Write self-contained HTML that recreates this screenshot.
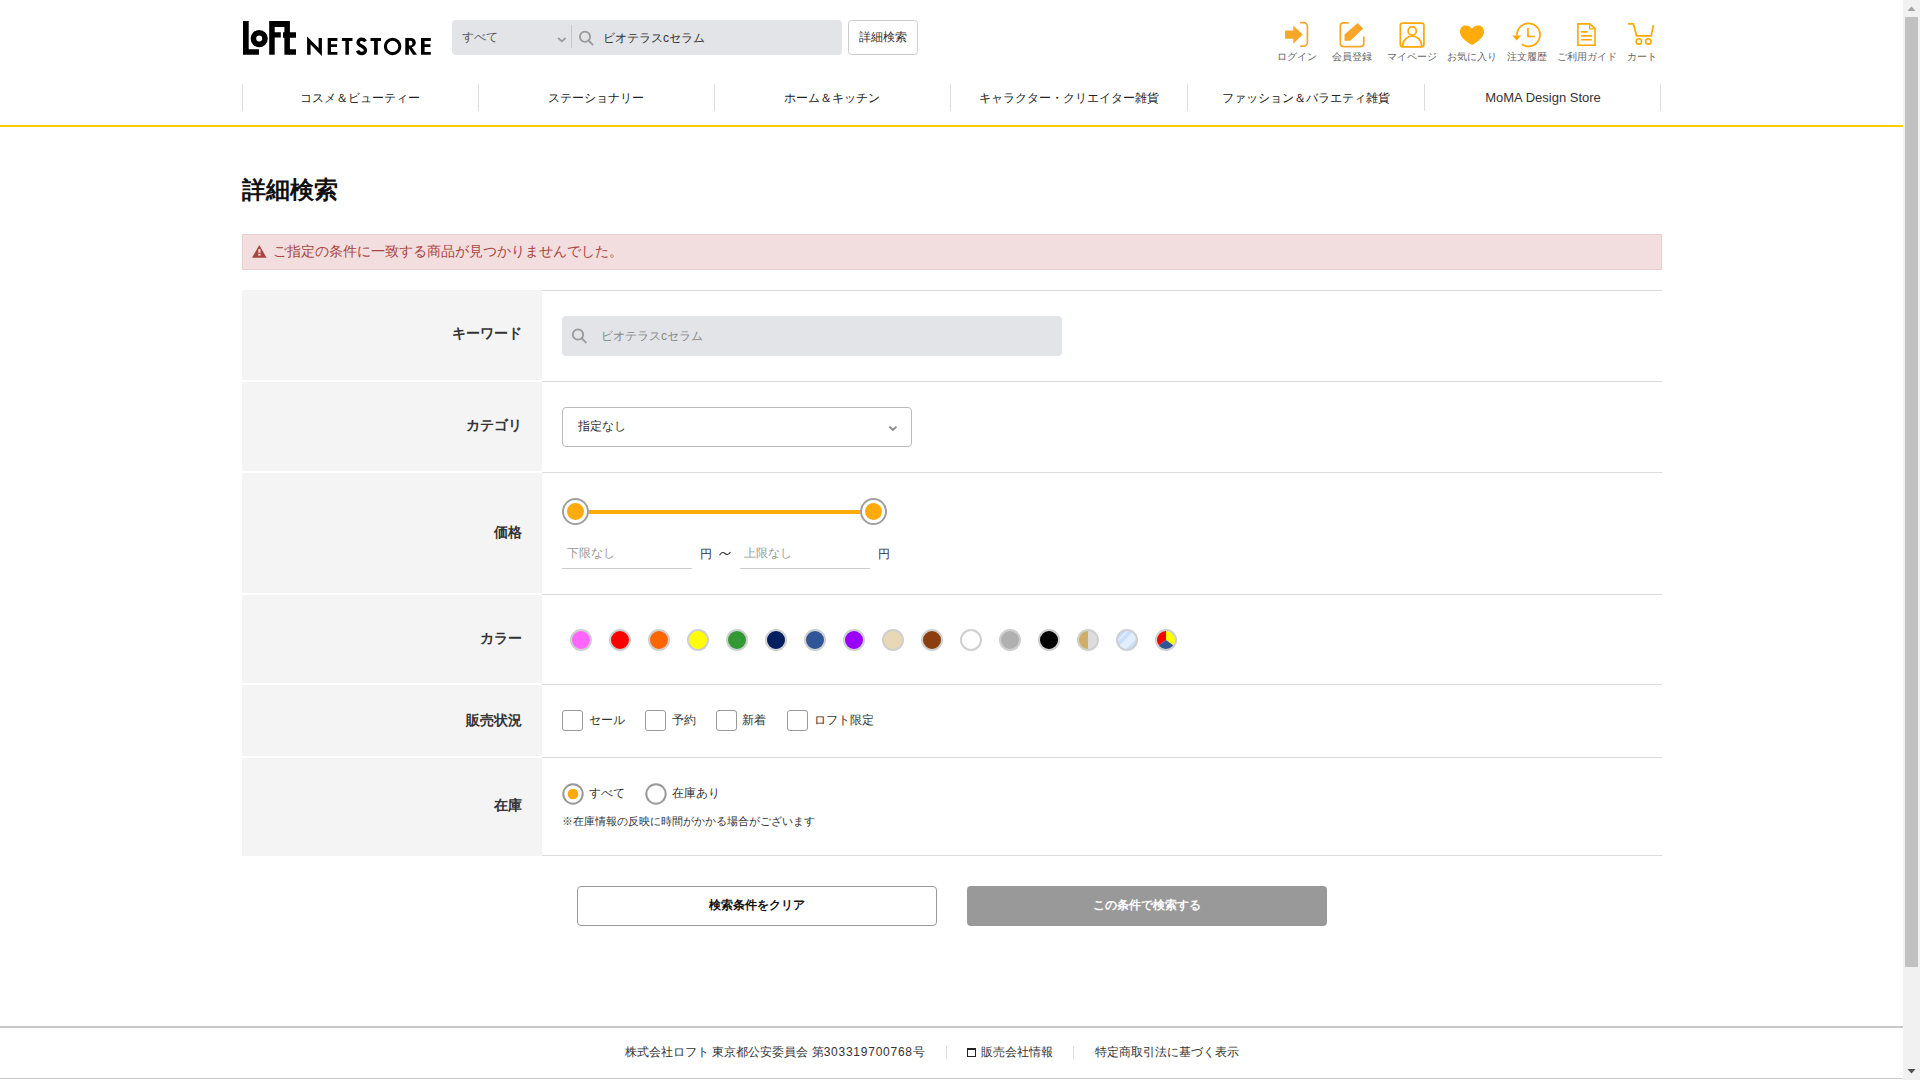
<!DOCTYPE html>
<html lang="ja">
<head>
<meta charset="utf-8">
<style>
html,body{margin:0;padding:0;width:1920px;height:1080px;overflow:hidden;background:#fff;}
body{font-family:"Liberation Sans",sans-serif;color:#333;position:relative;}
.a{position:absolute;}
.t{position:absolute;white-space:nowrap;line-height:1;}
svg{position:absolute;overflow:visible;}
</style>
</head>
<body>
<!-- HEADER -->
<svg class="a" style="left:0;top:0" width="1920" height="130">
  <!-- LoFt logo -->
  <g fill="#000">
    <path d="M243 21.1H248.7V49.2H259V54.7H243Z"/>
    <circle cx="259.2" cy="38.6" r="5.8" fill="none" stroke="#000" stroke-width="5.6"/>
    <path d="M269.2 21.1H289.9V54.7H284.4V37.8H283V32.3H284.4V27H274.7V32.3H280.8V37.6H274.7V54.7H269.2Z"/>
    <path d="M289 32.3H296V37.8H289ZM289 49.2H296V54.7H289Z"/>
    <!-- NETSTORE -->
    <path d="M307.1 36.4L318.6 48V38H321.9V55.9L310.6 44.6V54.8H307.1Z"/>
    <path d="M327.7 38H337.4V40.9H331V44.2H337V47H331V51.9H337.4V54.8H327.7Z"/>
    <path d="M341.9 38H352.5V40.9H348.9V54.8H345.4V40.9H341.9Z"/>
    <path d="M365.4 41.4C364.6 40 363.3 39.3 361.7 39.3C359.6 39.3 358.1 40.6 358.1 42.4C358.1 46.4 365.5 45.6 365.5 50.3C365.5 52.2 363.8 53.5 361.6 53.5C359.6 53.5 358.2 52.4 357.6 50.6" fill="none" stroke="#000" stroke-width="3.4"/>
    <path d="M370.5 38H381V40.9H377.8V54.8H374.1V40.9H370.5Z"/>
    <circle cx="392.6" cy="46.4" r="7.2" fill="none" stroke="#000" stroke-width="3.1"/>
    <path d="M405.3 38H410.5C413.8 38 415.8 39.9 415.8 42.6C415.8 45 414.3 46.8 411.8 47.3L417 54.8H413L408.9 48.2V54.8H405.3ZM408.9 40.8V45.6H410.2C411.6 45.6 412.4 44.8 412.4 43.2C412.4 41.6 411.6 40.8 410.2 40.8Z"/>
    <path d="M421 38H430.8V40.9H424.6V44.2H430.4V47H424.6V51.9H430.8V54.8H421Z"/>
  </g>
  <!-- search bar -->
  <rect x="452" y="20" width="390" height="35" rx="4" fill="#e3e4e8"/>
  <path d="M558.2 38L561.9 41.4L565.6 38" fill="none" stroke="#999" stroke-width="1.7"/>
  <rect x="571" y="25" width="1" height="23" fill="#c8c8cc"/>
  <circle cx="585" cy="36.8" r="5.1" fill="none" stroke="#999" stroke-width="1.8"/>
  <path d="M589 41L592.6 44.6" stroke="#999" stroke-width="1.9" stroke-linecap="round"/>
  <rect x="848.5" y="20.5" width="69" height="34" rx="3" fill="#fff" stroke="#ccc"/>
  <!-- icons -->
  <g fill="#f7a62a" stroke="none">
    <path d="M1285.1 30.5H1293.3V25.4L1302.7 34.6L1293.3 43.8V38.7H1285.1Z"/>
  </g>
  <g fill="none" stroke="#f7a62a" stroke-width="1.7">
    <path d="M1300.2 22.7H1303.4A4 4 0 0 1 1307.4 26.7V42.2A4 4 0 0 1 1303.4 46.2H1300.2"/>
    <path d="M1348.8 22.8H1343.3A3 3 0 0 0 1340.3 25.8V43.6A3 3 0 0 0 1343.3 46.6H1360.8A3 3 0 0 0 1363.8 43.6V36.4"/>
  </g>
  <path fill="#f7a62a" d="M1344.5 34.4L1357.7 23.1L1363.2 28.5L1350.3 40.7H1344.5Z"/>
  <g fill="none" stroke="#ffa800" stroke-width="1.7">
    <rect x="1400.3" y="23.1" width="23.6" height="23.8" rx="2.3"/>
    <circle cx="1412.2" cy="31" r="4.1"/>
    <path d="M1402.8 46.4V45.5A9.4 9.4 0 0 1 1421.6 45.5V46.4"/>
  </g>
  <path fill="#ffab0b" d="M1472 28.8C1469.5 24.5 1460 23.5 1460 32C1460 37 1466 41.5 1472 45C1478 41.5 1484 37 1484 32C1484 23.5 1474.5 24.5 1472 28.8Z"/>
  <g fill="none" stroke="#ffa800" stroke-width="1.7">
    <path d="M1517 35.2A11.5 11.5 0 1 1 1521.8 44.2"/>
    <path d="M1528 28.1V36.5H1534.9"/>
  </g>
  <path fill="#ffa800" d="M1512.3 35.4H1521.1L1516.7 40.6Z"/>
  <g fill="none" stroke="#ffa800" stroke-width="1.6">
    <path d="M1577.9 23.9H1589.8L1595 28.7V45.2H1577.9Z"/>
    <path d="M1589.6 24.3V28.9H1594.6" stroke-width="1.3"/>
    <path d="M1581.1 31.9H1587.7M1581.1 35.9H1591.8M1581.1 39.8H1591.8"/>
  </g>
  <g fill="none" stroke="#ffa800" stroke-width="1.8">
    <path d="M1628.1 23.8H1633.4L1636.6 35.9H1651.1L1653.5 25.1"/>
    <circle cx="1638.9" cy="41.4" r="2.7" stroke-width="1.6"/>
    <circle cx="1648.3" cy="41.4" r="2.7" stroke-width="1.6"/>
  </g>
  <!-- nav dividers -->
  <g fill="#ddd">
    <rect x="242" y="84" width="1" height="27"/>
    <rect x="478" y="84" width="1" height="27"/>
    <rect x="714" y="84" width="1" height="27"/>
    <rect x="950" y="84" width="1" height="27"/>
    <rect x="1187" y="84" width="1" height="27"/>
    <rect x="1424" y="84" width="1" height="27"/>
    <rect x="1660" y="84" width="1" height="27"/>
  </g>
  <rect x="0" y="125" width="1903" height="2" fill="#fecd00"/>
</svg>

<div class="t" style="left:462px;top:31px;font-size:12px;color:#555">すべて</div>
<div class="t" style="left:603px;top:32px;font-size:12px;color:#333">ビオテラスcセラム</div>
<div class="t" style="left:859px;top:31px;font-size:12px;color:#333">詳細検索</div>

<div class="t" style="left:1276px;top:52px;font-size:10px;color:#666;width:41px;text-align:center">ログイン</div>
<div class="t" style="left:1331px;top:52px;font-size:10px;color:#666;width:41px;text-align:center">会員登録</div>
<div class="t" style="left:1386px;top:52px;font-size:10px;color:#666;width:51px;text-align:center">マイページ</div>
<div class="t" style="left:1446px;top:52px;font-size:10px;color:#666;width:51px;text-align:center">お気に入り</div>
<div class="t" style="left:1506px;top:52px;font-size:10px;color:#666;width:41px;text-align:center">注文履歴</div>
<div class="t" style="left:1556px;top:52px;font-size:10px;color:#666;width:61px;text-align:center">ご利用ガイド</div>
<div class="t" style="left:1621px;top:52px;font-size:10px;color:#666;width:41px;text-align:center">カート</div>

<div class="t" style="left:242px;top:92px;width:236px;text-align:center;font-size:12px;color:#222">コスメ＆ビューティー</div>
<div class="t" style="left:478px;top:92px;width:236px;text-align:center;font-size:12px;color:#222">ステーショナリー</div>
<div class="t" style="left:714px;top:92px;width:236px;text-align:center;font-size:12px;color:#222">ホーム＆キッチン</div>
<div class="t" style="left:950px;top:92px;width:237px;text-align:center;font-size:12px;color:#222">キャラクター・クリエイター雑貨</div>
<div class="t" style="left:1187px;top:92px;width:237px;text-align:center;font-size:12px;color:#222">ファッション＆バラエティ雑貨</div>
<div class="t" style="left:1425px;top:91px;width:236px;text-align:center;font-size:13px;color:#333">MoMA Design Store</div>

<!-- MAIN -->
<div class="t" style="left:242px;top:178px;font-size:24px;font-weight:bold;color:#111">詳細検索</div>

<div class="a" style="left:242px;top:234px;width:1418px;height:34px;background:#f2dede;border:1px solid #ebccd1"></div>
<svg style="left:0;top:0" width="1" height="1"><path d="M259.3 245L266.6 257.8H252Z" fill="#a94442"/><rect x="258.3" y="249.2" width="2.2" height="3.5" fill="#f2dede"/><rect x="258.3" y="253.7" width="2.2" height="2" fill="#f2dede"/></svg>
<div class="t" style="left:273px;top:244px;font-size:14px;color:#a94442">ご指定の条件に一致する商品が見つかりませんでした。</div>

<!-- table -->
<div class="a" style="left:242px;top:290px;width:300px;height:90px;background:#f4f4f4"></div>
<div class="a" style="left:242px;top:382px;width:300px;height:89px;background:#f4f4f4"></div>
<div class="a" style="left:242px;top:473px;width:300px;height:120px;background:#f4f4f4"></div>
<div class="a" style="left:242px;top:595px;width:300px;height:88px;background:#f4f4f4"></div>
<div class="a" style="left:242px;top:685px;width:300px;height:71px;background:#f4f4f4"></div>
<div class="a" style="left:242px;top:758px;width:300px;height:98px;background:#f4f4f4"></div>
<div class="a" style="left:542px;top:290px;width:1120px;height:1px;background:#dcdcdc"></div>
<div class="a" style="left:542px;top:381px;width:1120px;height:1px;background:#dcdcdc"></div>
<div class="a" style="left:542px;top:472px;width:1120px;height:1px;background:#dcdcdc"></div>
<div class="a" style="left:542px;top:594px;width:1120px;height:1px;background:#dcdcdc"></div>
<div class="a" style="left:542px;top:684px;width:1120px;height:1px;background:#dcdcdc"></div>
<div class="a" style="left:542px;top:757px;width:1120px;height:1px;background:#dcdcdc"></div>
<div class="a" style="left:542px;top:855px;width:1120px;height:1px;background:#dcdcdc"></div>

<div class="t" style="left:322px;top:326px;width:200px;text-align:right;font-size:14px;font-weight:bold;color:#333">キーワード</div>
<div class="t" style="left:322px;top:418px;width:200px;text-align:right;font-size:14px;font-weight:bold;color:#333">カテゴリ</div>
<div class="t" style="left:322px;top:525px;width:200px;text-align:right;font-size:14px;font-weight:bold;color:#333">価格</div>
<div class="t" style="left:322px;top:631px;width:200px;text-align:right;font-size:14px;font-weight:bold;color:#333">カラー</div>
<div class="t" style="left:322px;top:713px;width:200px;text-align:right;font-size:14px;font-weight:bold;color:#333">販売状況</div>
<div class="t" style="left:322px;top:798px;width:200px;text-align:right;font-size:14px;font-weight:bold;color:#333">在庫</div>

<!-- keyword input -->
<div class="a" style="left:562px;top:316px;width:500px;height:40px;background:#e3e4e8;border-radius:4px"></div>
<svg style="left:0;top:0" width="1" height="1"><circle cx="578" cy="334.5" r="5.2" fill="none" stroke="#999" stroke-width="1.8"/><path d="M582 338.6L585.8 342.4" stroke="#999" stroke-width="1.9" stroke-linecap="round"/></svg>
<div class="t" style="left:601px;top:330px;font-size:12px;color:#888">ビオテラスcセラム</div>

<!-- category -->
<div class="a" style="left:562px;top:407px;width:348px;height:38px;background:#fff;border:1px solid #bbb;border-radius:4px"></div>
<div class="t" style="left:578px;top:420px;font-size:12px;color:#333">指定なし</div>
<svg style="left:0;top:0" width="1" height="1"><path d="M889.4 426.6L892.9 430L896.4 426.6" fill="none" stroke="#888" stroke-width="1.9"/></svg>

<!-- price slider -->
<svg style="left:0;top:0" width="1" height="1">
  <rect x="575" y="510" width="298" height="4" fill="#fdab0b"/>
  <circle cx="575.5" cy="511.5" r="12.5" fill="#fff" stroke="#a0a0a0" stroke-width="2"/>
  <circle cx="575.5" cy="511.5" r="8.5" fill="#ffab0b"/>
  <circle cx="873.5" cy="511.5" r="12.5" fill="#fff" stroke="#a0a0a0" stroke-width="2"/>
  <circle cx="873.5" cy="511.5" r="8.5" fill="#ffab0b"/>
</svg>
<div class="t" style="left:567px;top:547px;font-size:12px;color:#999">下限なし</div>
<div class="a" style="left:562px;top:568px;width:130px;height:1px;background:#ccc"></div>
<div class="t" style="left:700px;top:548px;font-size:12px;color:#333">円</div>
<svg style="left:0;top:0" width="1" height="1"><path d="M719.5 555.2C721.5 552 723.5 552 725 553.5C726.5 555 728.5 555 730.5 552" fill="none" stroke="#333" stroke-width="1.1"/></svg>
<div class="t" style="left:744px;top:547px;font-size:12px;color:#999">上限なし</div>
<div class="a" style="left:740px;top:568px;width:130px;height:1px;background:#ccc"></div>
<div class="t" style="left:878px;top:548px;font-size:12px;color:#333">円</div>

<!-- colors -->
<svg style="left:0;top:0" width="1" height="1">
  <defs>
    <clipPath id="cc"><circle cx="0" cy="0" r="9.6"/></clipPath>
  </defs>
  <g stroke="#cfcfcf" stroke-width="2">
    <circle cx="581" cy="640" r="10" fill="#ff66ff"/>
    <circle cx="620" cy="640" r="10" fill="#ff0000"/>
    <circle cx="659" cy="640" r="10" fill="#ff6600"/>
    <circle cx="698" cy="640" r="10" fill="#ffff00"/>
    <circle cx="737" cy="640" r="10" fill="#339933"/>
    <circle cx="776" cy="640" r="10" fill="#001f5f"/>
    <circle cx="815" cy="640" r="10" fill="#2f5597"/>
    <circle cx="854" cy="640" r="10" fill="#9900ff"/>
    <circle cx="893" cy="640" r="10" fill="#e8d8b6"/>
    <circle cx="932" cy="640" r="10" fill="#8b3f0f"/>
    <circle cx="971" cy="640" r="10" fill="#ffffff"/>
    <circle cx="1010" cy="640" r="10" fill="#b0b0b0"/>
    <circle cx="1049" cy="640" r="10" fill="#000000"/>
  </g>
  <g transform="translate(1088 640)">
    <g clip-path="url(#cc)">
      <rect x="-10" y="-10" width="10" height="20" fill="#cfae6a"/>
      <rect x="0" y="-10" width="10" height="20" fill="#dcdcdc"/>
    </g>
    <circle r="10" fill="none" stroke="#cfcfcf" stroke-width="2"/>
  </g>
  <g transform="translate(1127 640)">
    <g clip-path="url(#cc)">
      <rect x="-10" y="-10" width="20" height="20" fill="#c9defa"/>
      <path d="M-10.5 13.5L13.5 -10.5" stroke="#e2eefb" stroke-width="7.5"/>
      <path d="M-10 1.5L1.5 -10" stroke="#e2eefb" stroke-width="1.4"/>
    </g>
    <circle r="10" fill="none" stroke="#cfcfcf" stroke-width="2"/>
  </g>
  <g transform="translate(1166 640)">
    <g clip-path="url(#cc)">
      <path d="M0 0V-11L-11 -11V8Z" fill="#ff0000"/>
      <path d="M0 0V-11H11V8Z" fill="#ffff00"/>
      <path d="M0 0L-11 8V11H11V8Z" fill="#2f5597"/>
    </g>
    <circle r="10" fill="none" stroke="#cfcfcf" stroke-width="2"/>
  </g>
</svg>

<!-- checkboxes -->
<div class="a" style="left:562px;top:710px;width:19px;height:19px;border:1px solid #999;border-radius:3px;background:#fff"></div>
<div class="t" style="left:589px;top:714px;font-size:12px;color:#333">セール</div>
<div class="a" style="left:645px;top:710px;width:19px;height:19px;border:1px solid #999;border-radius:3px;background:#fff"></div>
<div class="t" style="left:672px;top:714px;font-size:12px;color:#333">予約</div>
<div class="a" style="left:716px;top:710px;width:19px;height:19px;border:1px solid #999;border-radius:3px;background:#fff"></div>
<div class="t" style="left:742px;top:714px;font-size:12px;color:#333">新着</div>
<div class="a" style="left:787px;top:710px;width:19px;height:19px;border:1px solid #999;border-radius:3px;background:#fff"></div>
<div class="t" style="left:814px;top:714px;font-size:12px;color:#333">ロフト限定</div>

<!-- radios -->
<svg style="left:0;top:0" width="1" height="1">
  <circle cx="573" cy="794" r="9.7" fill="#fff" stroke="#999" stroke-width="2"/>
  <circle cx="573" cy="794" r="5.3" fill="#ffa800"/>
  <circle cx="656" cy="794" r="9.7" fill="#fff" stroke="#999" stroke-width="2"/>
</svg>
<div class="t" style="left:589px;top:787px;font-size:12px;color:#333">すべて</div>
<div class="t" style="left:672px;top:787px;font-size:12px;color:#333">在庫あり</div>
<div class="t" style="left:562px;top:816px;font-size:11px;color:#333">※在庫情報の反映に時間がかかる場合がございます</div>

<!-- buttons -->
<div class="a" style="left:577px;top:886px;width:358px;height:38px;border:1px solid #999;border-radius:4px;background:#fff"></div>
<div class="t" style="left:577px;top:899px;width:360px;text-align:center;font-size:12px;font-weight:bold;color:#111">検索条件をクリア</div>
<div class="a" style="left:967px;top:886px;width:360px;height:40px;border-radius:4px;background:#999"></div>
<div class="t" style="left:967px;top:899px;width:360px;text-align:center;font-size:12px;font-weight:bold;color:#fff">この条件で検索する</div>

<!-- footer -->
<div class="a" style="left:0;top:1026px;width:1903px;height:2px;background:#c8c8c8"></div>
<div class="a" style="left:0;top:1078px;width:1903px;height:1px;background:#ccc"></div>
<div class="t" style="left:625px;top:1046px;font-size:12px;color:#333">株式会社ロフト 東京都公安委員会 第<span style="letter-spacing:.75px">303319700768</span>号</div>
<div class="a" style="left:946px;top:1046px;width:1px;height:13px;background:#ddd"></div>
<div class="a" style="left:967px;top:1048px;width:7px;height:6px;border:1.5px solid #222;border-top-width:2.5px"></div>
<div class="t" style="left:981px;top:1046px;font-size:12px;color:#333">販売会社情報</div>
<div class="a" style="left:1073px;top:1046px;width:1px;height:13px;background:#ddd"></div>
<div class="t" style="left:1095px;top:1046px;font-size:12px;color:#333">特定商取引法に基づく表示</div>

<!-- scrollbar -->
<div class="a" style="left:1903px;top:0;width:17px;height:1080px;background:#f1f1f1"></div>
<div class="a" style="left:1905px;top:17px;width:13px;height:950px;background:#c1c1c1"></div>
<svg style="left:0;top:0" width="1" height="1"><path d="M1907.5 11H1915.5L1911.5 6.5Z" fill="#a3a3a3"/><path d="M1907.5 1069H1915.5L1911.5 1073.5Z" fill="#505050"/></svg>

</body>
</html>
